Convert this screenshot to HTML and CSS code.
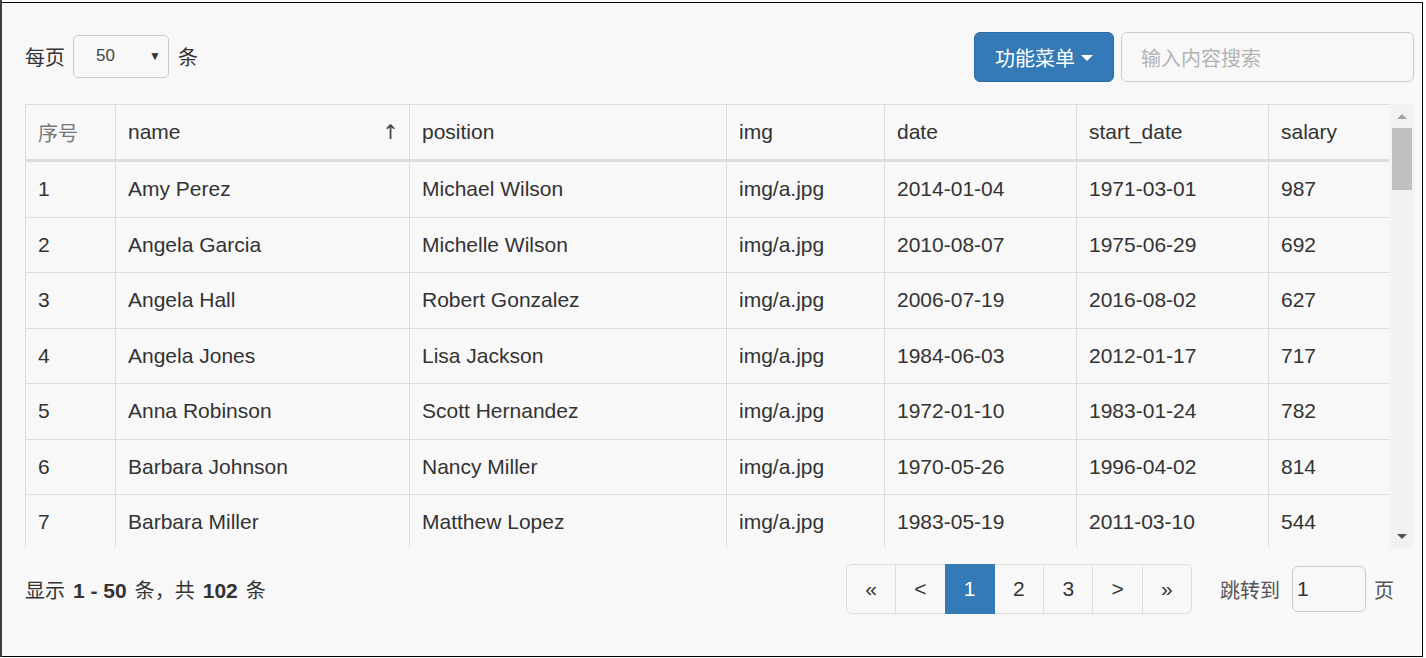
FILE: index.html
```html
<!DOCTYPE html>
<html lang="zh">
<head>
<meta charset="utf-8">
<title>表格</title>
<link rel="stylesheet" href="styles.css">
</head>
<body>
<div class="frame">
  <div class="toolbar">
    <div class="pagesize">
      <span class="cjk">每页</span>
      <div class="select"><span>50</span><span class="arrow">▼</span></div>
      <span class="cjk">条</span>
    </div>
    <div class="actions">
      <button class="btn-menu">功能菜单 <span class="caret"></span></button>
      <div class="search">输入内容搜索</div>
    </div>
  </div>

  <div class="grid-area">
    <div class="table-view">
      <table class="data">
        <colgroup>
          <col class="c-idx"><col class="c-name"><col class="c-pos"><col class="c-img"><col class="c-date"><col class="c-start"><col class="c-sal">
        </colgroup>
        <thead>
          <tr>
            <th class="idx-head">序号</th>
            <th><div class="sorted"><span>name</span><span class="sort-arrow">↑</span></div></th>
            <th>position</th>
            <th>img</th>
            <th>date</th>
            <th>start_date</th>
            <th>salary</th>
          </tr>
        </thead>
        <tbody>
          <tr><td>1</td><td>Amy Perez</td><td>Michael Wilson</td><td>img/a.jpg</td><td>2014-01-04</td><td>1971-03-01</td><td>987</td></tr>
          <tr><td>2</td><td>Angela Garcia</td><td>Michelle Wilson</td><td>img/a.jpg</td><td>2010-08-07</td><td>1975-06-29</td><td>692</td></tr>
          <tr><td>3</td><td>Angela Hall</td><td>Robert Gonzalez</td><td>img/a.jpg</td><td>2006-07-19</td><td>2016-08-02</td><td>627</td></tr>
          <tr><td>4</td><td>Angela Jones</td><td>Lisa Jackson</td><td>img/a.jpg</td><td>1984-06-03</td><td>2012-01-17</td><td>717</td></tr>
          <tr><td>5</td><td>Anna Robinson</td><td>Scott Hernandez</td><td>img/a.jpg</td><td>1972-01-10</td><td>1983-01-24</td><td>782</td></tr>
          <tr><td>6</td><td>Barbara Johnson</td><td>Nancy Miller</td><td>img/a.jpg</td><td>1970-05-26</td><td>1996-04-02</td><td>814</td></tr>
          <tr><td>7</td><td>Barbara Miller</td><td>Matthew Lopez</td><td>img/a.jpg</td><td>1983-05-19</td><td>2011-03-10</td><td>544</td></tr>
        </tbody>
      </table>
    </div>
    <div class="scrollbar">
      <div class="sb-up"></div>
      <div class="sb-track"><div class="sb-thumb"></div></div>
      <div class="sb-down"></div>
    </div>
  </div>

  <div class="footer">
    <div class="summary">显示<b>1 - 50</b>条，共<b>102</b>条</div>
    <div class="pager-wrap">
      <ul class="pager">
        <li>«</li>
        <li>&lt;</li>
        <li class="active">1</li>
        <li>2</li>
        <li>3</li>
        <li>&gt;</li>
        <li>»</li>
      </ul>
      <span class="jump-label">跳转到</span>
      <div class="jump-input">1</div>
      <span class="jump-label">页</span>
    </div>
  </div>
</div>
</body>
</html>
```

FILE: styles.css
```css
html, body {
  margin: 0;
  padding: 0;
}
body {
  background: #ffffff;
  border-left: 2px solid #3c3c3c;
  padding-top: 2px;
  height: 657px;
  box-sizing: border-box;
  font-family: "Liberation Sans", Arial, "Noto Sans CJK SC", sans-serif;
  color: #333;
}
.frame {
  width: 1421px;
  height: 655px;
  box-sizing: border-box;
  border: 1px solid #000;
  border-left: none;
  background: #f8f8f8;
  padding: 29px 8px 0 23px;
  display: flex;
  flex-direction: column;
}
.cjk {
  font-family: "Noto Sans CJK SC", sans-serif;
  font-size: 20px;
  color: #333;
}
.toolbar {
  display: flex;
  justify-content: space-between;
  align-items: center;
  height: 50px;
}
.pagesize {
  display: flex;
  align-items: center;
  gap: 8px;
  margin-top: -2px;
}
.pagesize .cjk:last-child {
  margin-left: 1px;
}
.select {
  width: 96px;
  height: 43px;
  box-sizing: border-box;
  border: 1px solid #ccc;
  border-radius: 5px;
  background: #f8f8f8;
  display: flex;
  align-items: center;
  justify-content: space-between;
  padding: 0 7px 0 22px;
  font-size: 17px;
  color: #444;
}
.select .arrow {
  font-size: 12px;
  color: #333;
}
.actions {
  display: flex;
  align-items: center;
  gap: 7px;
}
.btn-menu {
  width: 140px;
  height: 50px;
  background: #337ab7;
  border: 1px solid #2e6da4;
  border-radius: 6px;
  color: #fff;
  font-family: "Noto Sans CJK SC", sans-serif;
  font-size: 20px;
  display: flex;
  align-items: center;
  justify-content: center;
  gap: 6px;
  padding: 0;
}
.caret {
  width: 0;
  height: 0;
  border-left: 6px solid transparent;
  border-right: 6px solid transparent;
  border-top: 6px solid #fff;
  margin-top: 2px;
}
.search {
  width: 293px;
  height: 50px;
  box-sizing: border-box;
  border: 1px solid #ccc;
  border-radius: 6px;
  background: #f8f8f8;
  display: flex;
  align-items: center;
  padding-left: 19px;
  font-family: "Noto Sans CJK SC", sans-serif;
  font-size: 20px;
  color: #b3b3b3;
}
.grid-area {
  margin-top: 22px;
  height: 444px;
  display: flex;
  gap: 1px;
}
.table-view {
  width: 1364px;
  height: 444px;
  overflow: hidden;
}
table.data {
  border-collapse: collapse;
  table-layout: fixed;
  width: 1364px;
  font-size: 21px;
}
.c-idx { width: 90px; }
.c-name { width: 294px; }
.c-pos { width: 317px; }
.c-img { width: 158px; }
.c-date { width: 192px; }
.c-start { width: 192px; }
.c-sal { width: 121px; }
table.data th,
table.data td {
  border: 1px solid #ddd;
  padding: 0 12px;
  text-align: left;
  white-space: nowrap;
  color: #333;
  font-weight: normal;
}
table.data thead th {
  height: 54px;
  border-bottom: 3px solid #ddd;
  font-size: 21px;
}
table.data thead th.idx-head {
  font-family: "Noto Sans CJK SC", sans-serif;
  color: #777;
  font-size: 20px;
}
table.data tbody td {
  height: 54.5px;
}
.sorted {
  display: flex;
  justify-content: space-between;
  align-items: center;
}
.sort-arrow {
  font-family: "DejaVu Sans", sans-serif;
  font-size: 20px;
  color: #444;
  margin-right: -2px;
}
.scrollbar {
  width: 24px;
  height: 444px;
  display: flex;
  flex-direction: column;
  background-color: #f1f1f1;
  background-image: radial-gradient(#fafafa 0.6px, transparent 0.8px);
  background-size: 3px 3px;
}
.sb-up,
.sb-down {
  height: 24px;
  display: flex;
  align-items: center;
  justify-content: center;
}
.sb-up::before {
  content: "";
  border-left: 5px solid transparent;
  border-right: 5px solid transparent;
  border-bottom: 5px solid #a3a3a3;
}
.sb-down::before {
  content: "";
  border-left: 5px solid transparent;
  border-right: 5px solid transparent;
  border-top: 5px solid #505050;
}
.sb-track {
  flex: 1;
  display: flex;
  justify-content: center;
}
.sb-thumb {
  width: 20px;
  height: 62px;
  background: #c1c1c1;
}
.footer {
  display: flex;
  justify-content: space-between;
  align-items: center;
  margin-top: 16px;
  height: 50px;
  padding-right: 20px;
}
.summary {
  font-family: "Noto Sans CJK SC", sans-serif;
  font-size: 20px;
  color: #333;
}
.summary b {
  font-family: "Liberation Sans", Arial, sans-serif;
  font-size: 21px;
  font-weight: bold;
  margin: 0 8px;
}
.pager-wrap {
  display: flex;
  align-items: center;
}
.pager {
  list-style: none;
  margin: 0;
  padding: 0;
  display: flex;
}
.pager li {
  width: 50.3px;
  height: 50px;
  box-sizing: border-box;
  border: 1px solid #ddd;
  margin-left: -1px;
  background: #f8f8f8;
  display: flex;
  align-items: center;
  justify-content: center;
  font-size: 21px;
  color: #333;
}
.pager li:first-child {
  margin-left: 0;
  border-radius: 6px 0 0 6px;
}
.pager li:last-child {
  border-radius: 0 6px 6px 0;
}
.pager li.active {
  background: #337ab7;
  border-color: #337ab7;
  color: #fff;
  position: relative;
}
.jump-label {
  font-family: "Noto Sans CJK SC", sans-serif;
  font-size: 20px;
  color: #555;
  margin-left: 28px;
}
.jump-label:last-child {
  margin-left: 8px;
}
.jump-input {
  width: 74px;
  height: 46px;
  box-sizing: border-box;
  border: 1px solid #ccc;
  border-radius: 6px;
  margin-left: 12px;
  display: flex;
  align-items: center;
  padding-left: 4px;
  font-size: 21px;
  color: #333;
}
```
